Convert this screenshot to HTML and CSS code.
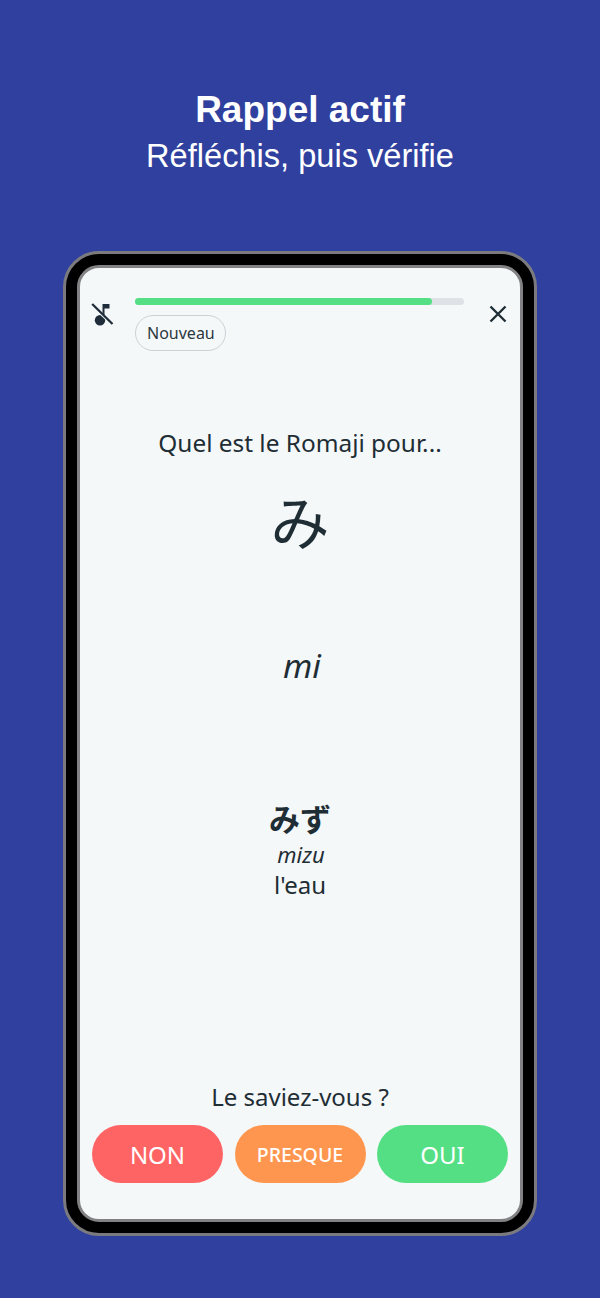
FILE: index.html
```html
<!DOCTYPE html>
<html lang="fr">
<head>
    <meta charset="UTF-8">
    <meta name="viewport" content="width=device-width, initial-scale=1.0">
    <title>Rappel actif</title>
    <link rel="stylesheet" href="styles.css">
</head>
<body>
    <header class="promo">
        <h1>Rappel actif</h1>
        <p>Réfléchis, puis vérifie</p>
    </header>

    <div class="phone">
        <main class="screen">
            <div class="topbar">
                <svg class="icon-sound" width="24" height="24" viewBox="0 0 24 24">
                    <circle cx="10" cy="18.2" r="5.2" fill="#1f2d3a"/>
                    <path d="M12.5 17V2h7v4.6h-5V17z" fill="#1f2d3a"/>
                    <path d="M3 4l20 19" stroke="#f4f8f9" stroke-width="3"/>
                    <path d="M2.2 2l20.3 20" stroke="#1f2d3a" stroke-width="2.3"/>
                </svg>
                <div class="progress-col">
                    <div class="progress"><div class="progress-fill"></div></div>
                    <span class="tag">Nouveau</span>
                </div>
                <svg class="icon-close" width="20" height="20" viewBox="0 0 20 20">
                    <path d="M2.5 2.5l15 15M17.5 2.5l-15 15" stroke="#1f2d35" stroke-width="2.4" fill="none"/>
                </svg>
            </div>

            <p class="question">Quel est le Romaji pour...</p>
            <div class="kana">み</div>
            <div class="romaji">mi</div>

            <div class="example">
                <div class="example-jp">みず</div>
                <div class="example-romaji">mizu</div>
                <div class="example-fr">l'eau</div>
            </div>

            <p class="prompt">Le saviez-vous ?</p>
            <div class="answers">
                <button class="btn btn-no">NON</button>
                <button class="btn btn-almost">PRESQUE</button>
                <button class="btn btn-yes">OUI</button>
            </div>
        </main>
    </div>
</body>
</html>
```
FILE: styles.css
```css
html, body {
    height: 100%;
}
body {
    margin: 0;
    background-color: #2f409e;
    font-family: "Noto Sans", sans-serif;
    color: #1f2d35;
    overflow: hidden;
}
.promo {
    padding-top: 88px;
    height: 163px;
    text-align: center;
    color: #fff;
    font-family: "Liberation Sans", Arial, sans-serif;
}
.promo h1 {
    margin: 0;
    font-size: 37px;
    line-height: 44px;
    font-weight: 700;
}
.promo p {
    margin: 0;
    font-size: 32.6px;
    line-height: 47px;
}
.phone {
    width: 474px;
    height: 985px;
    margin: 0 auto;
    box-sizing: border-box;
    padding: 11px;
    background-color: #000;
    border: 3px solid #7b7b7f;
    border-radius: 36px;
}
.screen {
    height: 100%;
    box-sizing: border-box;
    padding: 30px 12px 36px;
    background-color: #f4f8f9;
    border: 3px solid #828284;
    border-radius: 22px;
    display: flex;
    flex-direction: column;
    text-align: center;
}
.topbar {
    display: flex;
    align-items: flex-start;
}
.icon-sound {
    flex: none;
    margin: 4px 0 0 -2px;
}
.progress-col {
    flex: 1;
    margin: 0 24px 0 21px;
    display: flex;
    flex-direction: column;
    align-items: flex-start;
}
.progress {
    width: 100%;
    height: 7px;
    border-radius: 4px;
    background-color: #dde2e7;
}
.progress-fill {
    width: 90.3%;
    height: 100%;
    border-radius: 4px;
    background-color: #55df85;
}
.tag {
    margin-top: 10px;
    padding: 0 10px 0 11px;
    height: 34px;
    line-height: 34px;
    font-size: 16px;
    color: #2b3740;
    border: 1px solid #ccd1d6;
    border-radius: 18px;
}
.icon-close {
    flex: none;
    margin: 6px 0 0 0;
}
.question {
    margin: 76px 0 0;
    font-size: 24.4px;
    line-height: 32px;
}
.kana {
    margin-top: 19px;
    font-family: "Noto Sans CJK JP", sans-serif;
    font-size: 59px;
    line-height: 84px;
}
.romaji {
    margin-top: 81px;
    padding-left: 4px;
    font-size: 33.5px;
    line-height: 44px;
    font-style: italic;
}
.example {
    margin-top: 109px;
}
.example-jp {
    font-family: "Noto Sans CJK JP", sans-serif;
    font-size: 31px;
    line-height: 44px;
    font-weight: 700;
}
.example-romaji {
    padding-left: 2px;
    font-size: 22px;
    line-height: 28px;
    font-style: italic;
}
.example-fr {
    font-size: 24px;
    line-height: 34px;
}
.prompt {
    margin: auto 0 0;
    font-size: 24px;
    line-height: 32px;
}
.answers {
    display: flex;
    justify-content: space-between;
    margin-top: 12px;
}
.btn {
    width: 131px;
    height: 58px;
    border: none;
    border-radius: 30px;
    color: #fff;
    font-family: "Noto Sans", sans-serif;
    font-size: 24px;
    padding: 0;
}
.btn-no {
    background-color: #ff6464;
}
.btn-almost {
    background-color: #ff964f;
    font-size: 19.5px;
    font-weight: 500;
}
.btn-yes {
    background-color: #55df85;
}
```
